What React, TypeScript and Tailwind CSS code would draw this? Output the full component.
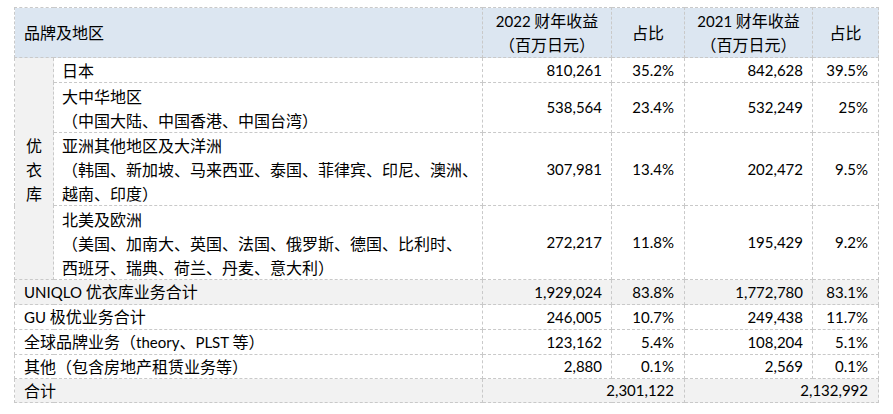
const cjk = "font-['Noto_Sans_CJK_SC',sans-serif]";

interface Row {
  name: string[];
  a: string;
  ap: string;
  b: string;
  bp: string;
  h: string;
}

const regions: Row[] = [
  { name: ['日本'], a: '810,261', ap: '35.2%', b: '842,628', bp: '39.5%', h: 'h-[23px]' },
  {
    name: ['大中华地区', '（中国大陆、中国香港、中国台湾）'],
    a: '538,564',
    ap: '23.4%',
    b: '532,249',
    bp: '25%',
    h: 'h-[50px]',
  },
  {
    name: ['亚洲其他地区及大洋洲', '（韩国、新加坡、马来西亚、泰国、菲律宾、印尼、澳洲、', '越南、印度）'],
    a: '307,981',
    ap: '13.4%',
    b: '202,472',
    bp: '9.5%',
    h: 'h-[73px]',
  },
  {
    name: ['北美及欧洲', '（美国、加南大、英国、法国、俄罗斯、德国、比利时、', '西班牙、瑞典、荷兰、丹麦、意大利）'],
    a: '272,217',
    ap: '11.8%',
    b: '195,429',
    bp: '9.2%',
    h: 'h-[74px]',
  },
];

const totals: (Row & { gray?: boolean })[] = [
  { name: ['UNIQLO 优衣库业务合计'], a: '1,929,024', ap: '83.8%', b: '1,772,780', bp: '83.1%', h: 'h-[24px]', gray: true },
  { name: ['GU 极优业务合计'], a: '246,005', ap: '10.7%', b: '249,438', bp: '11.7%', h: 'h-[23px]' },
  { name: ['全球品牌业务（theory、PLST 等）'], a: '123,162', ap: '5.4%', b: '108,204', bp: '5.1%', h: 'h-[25px]' },
  { name: ['其他（包含房地产租赁业务等）'], a: '2,880', ap: '0.1%', b: '2,569', bp: '0.1%', h: 'h-[24px]' },
];

const cell = 'border border-dashed border-[#c9c9c9] align-middle p-0 leading-[23px]';
const num = `${cell} text-right pr-[9px] font-['Lato',sans-serif] text-[15px]`;
const pct = `${cell} text-right pr-[10px] font-['Lato',sans-serif] text-[15px]`;

export default function App() {
  return (
    <div className={`pt-[7px] pl-[14px] bg-white min-h-[414px] text-black text-[16px] ${cjk}`}>
      <table className="table-fixed border-collapse w-[864px]">
        <colgroup>
          <col className="w-[39px]" />
          <col className="w-[429px]" />
          <col className="w-[129px]" />
          <col className="w-[73px]" />
          <col className="w-[128px]" />
          <col className="w-[66px]" />
        </colgroup>
        <thead>
          <tr className="h-[50px] bg-[#dce6f1]">
            <th colSpan={2} className={`${cell} text-left pl-[9px] font-normal`}>
              品牌及地区
            </th>
            <th className={`${cell} text-center font-normal leading-6`}>
              <span className="font-['Lato',sans-serif] text-[15px]">2022</span> 财年收益
              <br />
              （百万日元）
            </th>
            <th className={`${cell} text-center font-normal`}>占比</th>
            <th className={`${cell} text-center font-normal leading-6`}>
              <span className="font-['Lato',sans-serif] text-[15px]">2021</span> 财年收益
              <br />
              （百万日元）
            </th>
            <th className={`${cell} text-center font-normal`}>占比</th>
          </tr>
        </thead>
        <tbody>
          {regions.map((r, i) => (
            <tr key={r.a} className={r.h}>
              {i === 0 && (
                <td rowSpan={4} className={`${cell} bg-[#f2f2f2] text-center !leading-6`}>
                  优<br />衣<br />库
                </td>
              )}
              <td className={`${cell} pl-[8px] !leading-6`}>
                {r.name.map((line) => (
                  <div key={line}>{line}</div>
                ))}
              </td>
              <td className={num}>{r.a}</td>
              <td className={pct}>{r.ap}</td>
              <td className={num}>{r.b}</td>
              <td className={pct}>{r.bp}</td>
            </tr>
          ))}
          {totals.map((r) => (
            <tr key={r.a} className={`${r.h} ${r.gray ? 'bg-[#f2f2f2]' : ''}`}>
              <td colSpan={2} className={`${cell} pl-[9px]`}>
                {r.name[0].split(/([A-Za-z ]+)/).map((part, k) =>
                  /[A-Za-z]/.test(part) ? (
                    <span key={k} className="font-['Lato',sans-serif] text-[15px]">
                      {part}
                    </span>
                  ) : (
                    <span key={k}>{part}</span>
                  ),
                )}
              </td>
              <td className={num}>{r.a}</td>
              <td className={pct}>{r.ap}</td>
              <td className={num}>{r.b}</td>
              <td className={pct}>{r.bp}</td>
            </tr>
          ))}
          <tr className="h-[24px] bg-[#f2f2f2]">
            <td colSpan={2} className={`${cell} pl-[9px]`}>
              合计
            </td>
            <td colSpan={2} className={pct}>
              2,301,122
            </td>
            <td colSpan={2} className={pct}>
              2,132,992
            </td>
          </tr>
        </tbody>
      </table>
    </div>
  );
}
